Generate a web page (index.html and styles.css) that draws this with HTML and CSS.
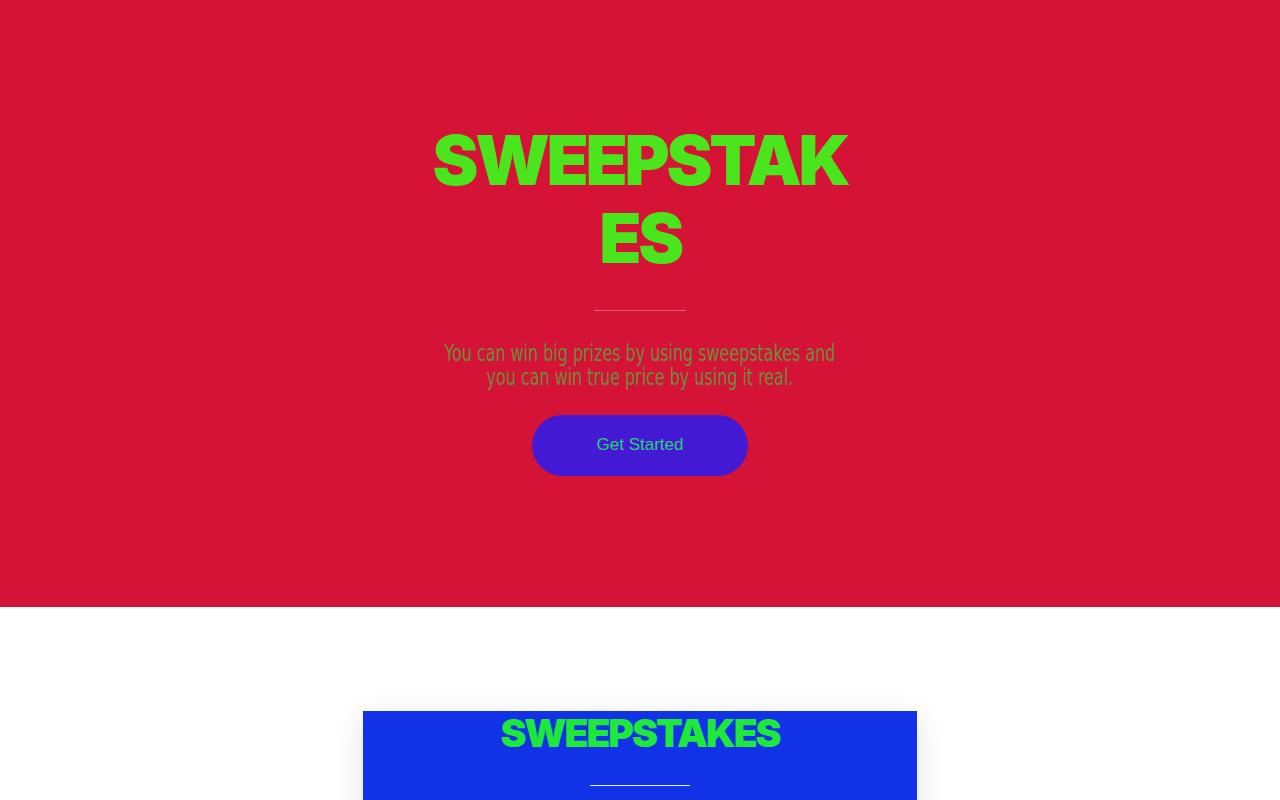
FILE: index.html
```html
<!DOCTYPE html>
<html>

<head>
  <title>Sweepstakes</title>
  <meta name="viewport" content="width=device-width, initial-scale=1.0">
  <link rel="stylesheet" href="styles.css">
</head>

<body>
  <header class="hero">
    <div class="hero-inner">
      <h1 class="hero-title">SWEEPSTAKES</h1>
      <hr class="rule">
      <p class="hero-text">You can win big prizes by using sweepstakes and you can win true price by using it real.</p>
      <a class="btn" href="#">Get Started</a>
    </div>
  </header>

  <section class="about">
    <div class="card">
      <h2 class="card-title">SWEEPSTAKES</h2>
      <hr class="rule rule-light">
    </div>
  </section>
</body>

</html>
```

FILE: styles.css
```css
body {
  margin: 0;
  padding: 0;
  font-family: 'Liberation Sans', Arial, sans-serif;
  background: #fff;
}

.hero {
  background: #d51336;
  height: 607px;
  display: flex;
  justify-content: center;
  align-items: center;
}

.hero-inner {
  width: 430px;
  display: flex;
  flex-direction: column;
  align-items: center;
  text-align: center;
  margin-top: -11px;
}

.hero-title {
  margin: 0;
  font-family: Inter, sans-serif;
  font-weight: 900;
  font-size: 69px;
  line-height: 78px;
  letter-spacing: -3.3px;
  color: #4ae51c;
  word-break: break-all;
}

.rule {
  width: 92px;
  border: none;
  border-top: 1px solid #ea5d6f;
  margin: 33px 0 30px;
}

.hero-text {
  margin: 0 0 26px;
  font-family: 'DejaVu Sans Condensed', 'DejaVu Sans', sans-serif;
  font-size: 23px;
  line-height: 24px;
  color: #6f8a3a;
  transform: scaleX(0.77);
  width: 530px;
  flex-shrink: 0;
}

.btn {
  display: flex;
  align-items: center;
  justify-content: center;
  width: 216px;
  height: 61px;
  border-radius: 31px;
  background: #4419d3;
  color: #27d27a;
  font-size: 17px;
  text-decoration: none;
}

.about {
  display: flex;
  justify-content: center;
  padding-top: 104px;
}

.card {
  width: 554px;
  height: 200px;
  background: #1232e8;
  box-shadow: 0 8px 30px rgba(0, 0, 0, 0.12);
  display: flex;
  flex-direction: column;
  align-items: center;
}

.card-title {
  margin: 0;
  font-family: Inter, sans-serif;
  font-weight: 900;
  font-size: 39px;
  line-height: 44px;
  letter-spacing: -2px;
  color: #1ee83a;
}

.rule-light {
  width: 100px;
  border-top-color: #e6e9ff;
  margin: 30px 0 0;
}
```
